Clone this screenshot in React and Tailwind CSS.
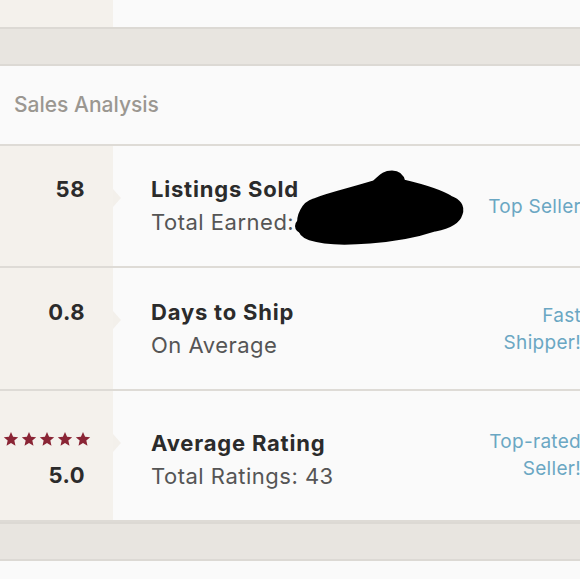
import React from "react";

const font = { fontFamily: "Inter, Lato, sans-serif" };

function Star() {
  return (
    <svg width="16" height="16" viewBox="0 0 24 24" className="block">
      <path
        d="M12 1.5l3.1 7.1 7.7.7-5.8 5.1 1.7 7.6L12 18l-6.7 4 1.7-7.6L1.2 9.3l7.7-.7z"
        fill="#8a2535"
      />
    </svg>
  );
}

function Notch() {
  return (
    <div className="absolute left-[113px] top-[43px] w-0 h-0 border-y-[9px] border-y-transparent border-l-[8px] border-l-[#f3f0eb]" />
  );
}

function Band() {
  return <div className="h-[39px] bg-[#e8e5e0] border-y-2 border-[#dcd9d4]" />;
}

function Row({ left, title, sub, right, h, children, pt = "", lpt = "" }) {
  return (
    <div className={`relative flex ${h} border-b-2 border-[#dedbd6]`}>
      <div className={`w-[113px] bg-[#f4f1ec] shrink-0 flex flex-col justify-center items-end pr-[28px] ${lpt}`}>
        {left}
      </div>
      <Notch />
      <div className={`flex-1 flex items-center pl-[38px] bg-[#fafafa] ${pt}`}>
        <div className="flex flex-col">
          <div className="text-[22px] leading-[33px] font-bold text-[#2b2b2b] tracking-[0.8px]">{title}</div>
          <div className="text-[22px] leading-[33px] text-[#555] tracking-[0.5px]">{sub}</div>
        </div>
      </div>
      <div className="flex items-center justify-end pr-[19px] bg-[#fafafa] text-right text-[19px] leading-[27px] tracking-[0.3px] text-[#6aa7c3] w-[200px]">
        {right}
      </div>
      {children}
    </div>
  );
}

export default function App() {
  return (
    <div className="w-[580px] h-[579px] overflow-hidden bg-[#fafafa]" style={font}>
      <div className="w-[600px]">
        <div className="flex h-[27px]">
          <div className="w-[113px] bg-[#f4f1ec]" />
          <div className="flex-1 bg-[#fafafa]" />
        </div>
        <Band />
        <div className="h-[80px] flex items-center pl-[14px] bg-[#fafafa] border-b-2 border-[#dedbd6]">
          <span className="text-[21px] font-medium text-[#9b9791]">Sales Analysis</span>
        </div>

        <Row
          h="h-[122px]"
          left={<span className="text-[22px] leading-[33px] font-bold text-[#2b2b2b] -mt-[33px] tracking-[0.5px]">58</span>}
          title="Listings Sold"
          sub="Total Earned:"
          right={<span>Top Seller</span>}
        >
          <svg className="absolute left-0 top-0" width="600" height="122" viewBox="0 0 600 122">
            <path
              d="M300,80 C298,70 304,58 314,55 C332,48 352,44 374,37 C380,33 382,27 392,27 C400,27 402,32 403,36 C420,40 440,46 450,52 C458,55 463,60 460,68 C458,75 450,80 435,83 C420,88 400,93 370,95 C345,97 325,97 310,92 C302,89 300,85 300,80 Z"
              fill="#000"
              stroke="#000"
              strokeWidth="5"
              strokeLinejoin="round"
            />
            <circle cx="302" cy="80" r="7" fill="#000" />
            <circle cx="455" cy="64" r="7" fill="#000" />
          </svg>
        </Row>

        <Row
          h="h-[123px]"
          left={<span className="text-[22px] leading-[33px] font-bold text-[#2b2b2b] -mt-[33px] tracking-[0.5px]">0.8</span>}
          title="Days to Ship"
          sub="On Average"
          right={
            <span>
              Fast
              <br />
              Shipper!
            </span>
          }
        />

        <Row
          h="h-[131px]"
          pt="pt-[9px]"
          lpt="pt-[12px]"
          left={
            <div className="flex flex-col items-end">
              <div className="flex gap-[2px] mr-[-6px]">
                <Star />
                <Star />
                <Star />
                <Star />
                <Star />
              </div>
              <span className="text-[22px] leading-[33px] font-bold text-[#2b2b2b] mt-[12px] tracking-[0.5px]">5.0</span>
            </div>
          }
          title="Average Rating"
          sub="Total Ratings: 43"
          right={
            <span className="-mt-[2px]">
              Top-rated
              <br />
              Seller!
            </span>
          }
        />
        <Band />
      </div>
    </div>
  );
}
